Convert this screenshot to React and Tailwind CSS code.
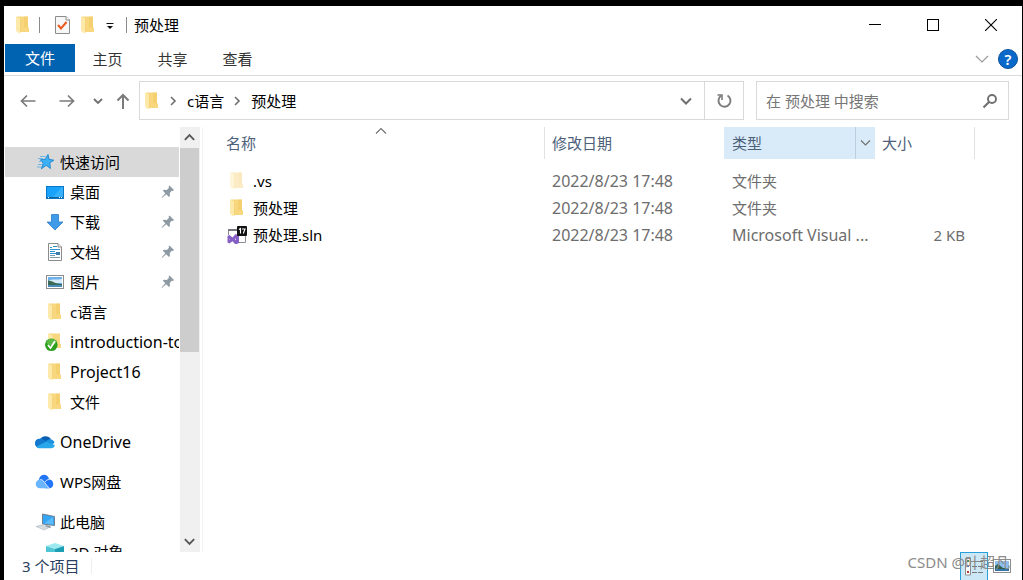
import React, { useState } from "react";

const FolderIcon = ({ faded = false }) => (
  <svg
    width="20"
    height="18"
    viewBox="0 0 20 18"
    className={faded ? "shrink-0 opacity-45" : "shrink-0"}
    aria-hidden="true"
  >
    <path d="M4 0.5H15V11.5H16V16H4Z" fill="#f8d77f" />
    <path d="M11 0.5H15V11.5H11Z" fill="#f4cb65" opacity="0.6" />
    <path d="M3 0.5L7.5 2.5V17.5L4 16L3 14Z" fill="#fde9a9" />
    <path d="M7.5 2.5V16" stroke="#edc65f" strokeWidth="0.5" />
  </svg>
);

const StarIcon = () => (
  <svg width="20" height="18" viewBox="0 0 20 18" className="shrink-0" aria-hidden="true">
    <path
      d="M13 1.5L14 6.3L18.8 7.2L14.8 9.8L15.4 15.5L11.2 12.3L6.4 15.8L8.2 10.2L5.4 6.8L10.2 6.3Z"
      fill="#3bb0f7"
      stroke="#1b83cf"
      strokeWidth="0.9"
    />
    <path d="M5 3.5H10.5M3 5.5H8M4 8.5H7M3 11.5H7M2 14H6" stroke="#63b1e8" strokeWidth="0.9" />
  </svg>
);

const DesktopIcon = () => (
  <svg width="20" height="18" viewBox="0 0 20 18" className="shrink-0" aria-hidden="true">
    <rect x="1.5" y="3.5" width="17" height="12" fill="#19a2fb" stroke="#0b76c4" />
    <path d="M8 14L17 4H18V14Z" fill="#45b7ff" opacity="0.7" />
    <path d="M2 14.5H18" stroke="#0a639f" />
    <path d="M3 14.5H5M14 14.5H17" stroke="#fff" strokeDasharray="1 1" />
  </svg>
);

const DownloadIcon = () => (
  <svg width="20" height="18" viewBox="0 0 20 18" className="shrink-0" aria-hidden="true">
    <path
      d="M6.5 1.5H13.5V9H18L10 17L2 9H6.5Z"
      fill="#3f9ae8"
      stroke="#2b7dc9"
      strokeWidth="0.8"
    />
  </svg>
);

const DocumentIcon = () => (
  <svg width="20" height="18" viewBox="0 0 20 18" className="shrink-0" aria-hidden="true">
    <path d="M3.5 0.5H13L16.5 4V17.5H3.5Z" fill="#fff" stroke="#8b8b8b" />
    <path d="M13 0.5V4H16.5" fill="#eee" stroke="#8b8b8b" />
    <path d="M5 4.5H7M8 3.5H12M5 6.5H15M5 8.5H10M5 10.5H15" stroke="#2b93d1" />
    <path d="M5 12.5H10M5 14.5H15" stroke="#7a9bb0" />
    <rect x="11" y="9" width="4" height="3" fill="#3b7fae" />
  </svg>
);

const PictureIcon = () => (
  <svg width="20" height="18" viewBox="0 0 20 18" className="shrink-0" aria-hidden="true">
    <rect x="1.5" y="2.5" width="17" height="13" fill="#fff" stroke="#8d8d8d" />
    <rect x="3" y="4" width="14" height="10" fill="#6fb1ea" />
    <path d="M3 8C7 5.5 12 7 17 6V10H3Z" fill="#d5ebf8" />
    <path d="M3 7.5C7 7.5 10 11 17 11V12H3Z" fill="#3b6b56" />
    <path d="M3 12H17V14H3Z" fill="#4a8dba" />
  </svg>
);

const SyncedFolderIcon = () => (
  <svg width="20" height="18" viewBox="0 0 20 18" className="shrink-0" aria-hidden="true">
    <path d="M4 0.5H15V11H16V15H4Z" fill="#f8d77f" />
    <path d="M3 0.5L7.5 2.5V12H3Z" fill="#fde9a9" />
    <circle cx="6.3" cy="11.7" r="6.3" fill="#2e9e1e" />
    <ellipse cx="6.3" cy="9" rx="4.8" ry="3" fill="#6cc552" opacity="0.7" />
    <path d="M3 12L5.5 15L10 8" stroke="#fff" strokeWidth="1.7" fill="none" />
  </svg>
);

const OneDriveIcon = () => (
  <svg width="20" height="18" viewBox="0 0 20 18" className="shrink-0" aria-hidden="true">
    <path d="M5 6.5A6 5.5 0 0 1 15.8 6L13 12H4Z" fill="#0a5fb2" />
    <path d="M4.5 5.7A4.8 4.8 0 0 1 8.5 6.5L14 10L6 15H4.5A4.5 4.5 0 0 1 4.5 5.7Z" fill="#1279cf" />
    <path d="M11 8.8C12 5.5 18 5 19.5 9.5L16 13Z" fill="#1b91e0" />
    <path d="M1.5 13.5L11 8.8L19.8 12C19.5 14.2 18 15.3 16 15.3H4.5C3.2 15.3 2 14.6 1.5 13.5Z" fill="#28a8ea" />
  </svg>
);

const WpsCloudIcon = () => (
  <svg width="20" height="18" viewBox="0 0 20 18" className="shrink-0" aria-hidden="true">
    <path d="M4 7A5 5 0 0 1 14 6.5A4.5 4.5 0 0 1 15 15.3H10L5 9Z" fill="#2176f5" />
    <path d="M5.3 6.5C9 6.5 10.5 12 14.5 15.3H5A4.4 4.4 0 0 1 5.3 6.5Z" fill="#69b5ff" />
    <path d="M5.3 6.5C9 6.5 10.5 12 14.5 15.3" stroke="#fff" strokeWidth="0.8" fill="none" />
    <path d="M10 9C11 7.3 12.5 6.6 14 6.5" stroke="#fff" strokeWidth="0.8" fill="none" />
  </svg>
);

const ComputerIcon = () => (
  <svg width="20" height="18" viewBox="0 0 20 18" className="shrink-0" aria-hidden="true">
    <path d="M7.5 1L19.5 3.5V12.5L7.5 11Z" fill="#34a6f5" stroke="#6a7681" strokeWidth="0.9" />
    <path d="M9 10.5L18 4V11.5Z" fill="#70c4fb" opacity="0.7" />
    <path d="M10 12L15 12.8L16 15L12 14.5Z" fill="#8d969d" />
    <path d="M1 13.5L6 12L14 14.5L9.5 17Z" fill="#d8dde0" stroke="#aab2b8" strokeWidth="0.6" />
  </svg>
);

const CubeIcon = () => (
  <svg width="20" height="18" viewBox="0 0 20 18" className="shrink-0" aria-hidden="true">
    <path d="M10 0L19 3L10 6L1 3Z" fill="#9ceaf0" />
    <path d="M1 3L10 6V18L1 15Z" fill="#4fc6d6" />
    <path d="M19 3L10 6V18L19 15Z" fill="#1c9fb4" />
  </svg>
);

const SolutionIcon = () => (
  <svg width="20" height="18" viewBox="0 0 20 18" className="shrink-0" aria-hidden="true">
    <path d="M1.5 9V3.5H18.5V16.5H12" fill="#fff" stroke="#8b8b93" />
    <rect x="1" y="3" width="10" height="2" fill="#77777f" />
    <path
      fillRule="evenodd"
      d="M8.5 8L12 9.5V17L8.5 18.5L5.5 15.2L2.5 17.5L0.5 16.5V10L2.5 9L5.5 11.5ZM9 12.3L8 13.3L9 14.3ZM2 12.7V14L2.6 13.3Z"
      fill="#865fc5"
    />
    <rect x="10" y="0" width="10" height="10" rx="1" fill="#111" />
    <path d="M12 3.5L13.5 2.5V7.5M15 3H18L16.3 7.5" stroke="#fff" strokeWidth="1.1" fill="none" />
  </svg>
);

const PinIcon = () => (
  <svg width="14" height="14" viewBox="0 0 14 14" className="mr-1 shrink-0" aria-hidden="true">
    <path
      d="M8.5 0.5L13 5L12 6L10.8 5.8L8.8 8L8.9 11L8 12L5.2 9.2L1 13L0.6 12.6L4.3 8.3L1.8 5.8L2.8 4.8L5.8 5L8 2.8L7.6 1.5Z"
      fill="#8e9aa3"
    />
  </svg>
);

const Chevron = ({ d, size = 14, className = "text-[#6f6f6f]", weight = 1.6 }) => (
  <svg width={size} height={size} viewBox="0 0 14 14" className={className} aria-hidden="true">
    <path d={d} fill="none" stroke="currentColor" strokeWidth={weight} />
  </svg>
);

const DOWN = "M2 4.5L7 9.5L12 4.5";
const UP = "M2 9.5L7 4.5L12 9.5";
const RIGHT = "M5 3L9 7L5 11";

const quickAccess = [
  { name: "桌面", icon: <DesktopIcon />, pinned: true },
  { name: "下载", icon: <DownloadIcon />, pinned: true },
  { name: "文档", icon: <DocumentIcon />, pinned: true },
  { name: "图片", icon: <PictureIcon />, pinned: true },
  { name: "c语言", icon: <FolderIcon /> },
  { name: "introduction-to", icon: <SyncedFolderIcon /> },
  { name: "Project16", icon: <FolderIcon /> },
  { name: "文件", icon: <FolderIcon /> },
];

const files = [
  { name: ".vs", icon: <FolderIcon faded />, date: "2022/8/23 17:48", type: "文件夹", size: "" },
  { name: "预处理", icon: <FolderIcon />, date: "2022/8/23 17:48", type: "文件夹", size: "" },
  {
    name: "预处理.sln",
    icon: <SolutionIcon />,
    date: "2022/8/23 17:48",
    type: "Microsoft Visual ...",
    size: "2 KB",
  },
];

const textSize = (text) => (/^[\x20-\x7e]+$/.test(text) ? "text-[16px]" : "text-[15px]");

const TreeItem = ({ icon, name, pinned, nested, active }) => (
  <a
    href="#"
    className={`flex h-[30px] shrink-0 items-center gap-[5px] ${nested ? "pl-10" : "pl-[30px]"} ${
      active ? "bg-[#d9d9d9]" : ""
    }`}
  >
    {icon}
    <span className={`flex-1 overflow-hidden whitespace-nowrap ${textSize(name)}`}>{name}</span>
    {pinned && <PinIcon />}
  </a>
);

const TitleBar = () => (
  <header className="flex h-[38px] shrink-0 items-center pl-[9px]">
    <FolderIcon />
    <span className="ml-1.5 h-4 w-px bg-[#8a8a8a]" />
    <button type="button" aria-label="属性" className="ml-[14px]">
      <svg width="16" height="18" viewBox="0 0 16 18">
        <path d="M1.5 0.5H12L15.5 4V17.5H1.5Z" fill="#f7f7f7" stroke="#8c8c8c" />
        <path d="M12 0.5V4H15.5" fill="#fff" stroke="#8c8c8c" />
        <path d="M4 9L7 12.5L12.5 6" fill="none" stroke="#e8591c" strokeWidth="2" />
      </svg>
    </button>
    <button type="button" aria-label="新建文件夹" className="ml-2">
      <FolderIcon />
    </button>
    <button type="button" aria-label="自定义快速访问工具栏" className="ml-2">
      <svg width="8" height="10" viewBox="0 0 8 10">
        <path d="M0.5 3.5H7.5" stroke="#111" />
        <path d="M1 6H7L4 9Z" fill="#111" />
      </svg>
    </button>
    <span className="ml-3 h-4 w-px bg-[#8a8a8a]" />
    <h1 className="ml-[7px] flex-1">预处理</h1>
    <div className="mr-0.5 flex h-full">
      <button type="button" aria-label="最小化" className="flex w-[58px] items-center justify-center">
        <svg width="12" height="12" viewBox="0 0 12 12">
          <path d="M0 5.5H12" stroke="#000" />
        </svg>
      </button>
      <button type="button" aria-label="最大化" className="flex w-[58px] items-center justify-center">
        <svg width="12" height="12" viewBox="0 0 12 12">
          <rect x="0.5" y="0.5" width="11" height="11" fill="none" stroke="#000" />
        </svg>
      </button>
      <button type="button" aria-label="关闭" className="flex w-[58px] items-center justify-center">
        <svg width="12" height="12" viewBox="0 0 12 12">
          <path d="M0 0L12 12M12 0L0 12" stroke="#000" strokeWidth="1.1" />
        </svg>
      </button>
    </div>
  </header>
);

const Ribbon = () => (
  <nav className="flex h-8 shrink-0 items-start border-b border-[#dadbdc] pl-px text-[#333]">
    <button type="button" className="h-7 w-[70px] bg-[#0063b1] text-white">
      文件
    </button>
    <button type="button" className="h-[30px] w-[65px]">主页</button>
    <button type="button" className="h-[30px] w-[65px]">共享</button>
    <button type="button" className="h-[30px] w-[65px]">查看</button>
    <div className="mr-1 ml-auto flex h-[30px] items-center gap-[9px]">
      <button type="button" aria-label="展开功能区">
        <Chevron d="M1 4L7 10L13 4" weight={1.2} className="text-[#9a9a9a]" />
      </button>
      <button
        type="button"
        aria-label="帮助"
        className="h-5 w-5 rounded-full border border-[#0b539c] bg-[#0a68cb] text-[15px] leading-[18px] font-semibold text-white"
      >
        ?
      </button>
    </div>
  </nav>
);

const AddressRow = ({ query, setQuery }) => (
  <div className="flex h-[51px] shrink-0 items-start pt-[5px] pr-[13px] text-[#7b7b7b]">
    <div className="flex h-10 w-[135px] items-center pl-4">
      <button type="button" aria-label="后退">
        <svg width="16" height="14" viewBox="0 0 16 14">
          <path d="M15.5 7H1.5M7 1.5L1.5 7L7 12.5" fill="none" stroke="currentColor" strokeWidth="1.7" />
        </svg>
      </button>
      <button type="button" aria-label="前进" className="ml-[23px]">
        <svg width="16" height="14" viewBox="0 0 16 14">
          <path d="M0.5 7H14.5M9 1.5L14.5 7L9 12.5" fill="none" stroke="currentColor" strokeWidth="1.7" />
        </svg>
      </button>
      <button type="button" aria-label="最近浏览的位置" className="ml-4">
        <Chevron d="M3 5L7 9L11 5" weight={1.8} />
      </button>
      <button type="button" aria-label="上移" className="ml-[11px]">
        <svg width="14" height="16" viewBox="0 0 14 16">
          <path d="M7 16V2M1.5 7.5L7 2L12.5 7.5" fill="none" stroke="currentColor" strokeWidth="2" />
        </svg>
      </button>
    </div>
    <div className="flex h-[39px] flex-1 items-center border border-[#d9d9d9] pl-0.5 text-black">
      <FolderIcon />
      <span className="ml-1"><Chevron d={RIGHT} /></span>
      <a href="#" className="ml-[7px]">c语言</a>
      <span className="ml-[6px]"><Chevron d={RIGHT} /></span>
      <a href="#" className="ml-[7px] flex-1">预处理</a>
      <button type="button" aria-label="以前的位置" className="mr-[11px]">
        <Chevron d={DOWN} weight={2} />
      </button>
      <button
        type="button"
        aria-label="刷新"
        className="flex h-full w-[39px] items-center justify-center border-l border-[#d9d9d9] text-[#7b7b7b]"
      >
        <svg width="16" height="16" viewBox="0 0 16 16">
          <path d="M11.5 2.5A6 6 0 1 1 5 2.8" fill="none" stroke="currentColor" strokeWidth="1.9" />
          <path d="M1.5 2H6V7" fill="none" stroke="currentColor" strokeWidth="1.6" />
        </svg>
      </button>
    </div>
    <label className="ml-3 flex h-[39px] w-[253px] items-center border border-[#d9d9d9] pr-2.5 pl-[9px]">
      <input
        type="text"
        aria-label="搜索"
        value={query}
        onChange={(e) => setQuery(e.target.value)}
        placeholder="在 预处理 中搜索"
        className="min-w-0 flex-1 outline-none placeholder:text-[#767676]"
      />
      <svg width="16" height="16" viewBox="0 0 16 16" aria-hidden="true">
        <circle cx="10" cy="6" r="4" fill="none" stroke="#707070" strokeWidth="1.9" />
        <path d="M7 9L1.5 14.5" stroke="#707070" strokeWidth="2.2" />
      </svg>
    </label>
  </div>
);

const Sidebar = () => (
  <aside className="flex w-[199px] shrink-0 border-r border-[#f3f3f3] pl-px">
    <nav className="flex w-[174px] flex-col overflow-hidden pt-5">
      <TreeItem name="快速访问" icon={<StarIcon />} active />
      {quickAccess.map((item) => (
        <TreeItem key={item.name} {...item} nested />
      ))}
      <div className="mt-2.5 flex flex-col gap-2.5">
        <TreeItem name="OneDrive" icon={<OneDriveIcon />} />
        <TreeItem name="WPS网盘" icon={<WpsCloudIcon />} />
        <TreeItem name="此电脑" icon={<ComputerIcon />} />
      </div>
      <TreeItem name="3D 对象" icon={<CubeIcon />} nested />
    </nav>
    <div className="ml-px flex w-5 flex-col bg-[#f0f0f0]">
      <button type="button" aria-label="向上滚动" className="flex h-[21px] w-[19px] items-center justify-center">
        <Chevron d={UP} weight={2} className="text-[#555]" size={13} />
      </button>
      <div className="flex-1">
        <div className="h-1/2 min-h-[204px] w-[19px] bg-[#cdcdcd]" />
      </div>
      <button type="button" aria-label="向下滚动" className="flex h-[21px] w-[19px] items-center justify-center">
        <Chevron d={DOWN} weight={2} className="text-[#555]" size={13} />
      </button>
    </div>
  </aside>
);

const FileTable = () => (
  <main className="min-w-0 flex-1 overflow-hidden">
    <table className="w-[772px] table-fixed text-left">
      <colgroup>
        <col className="w-[342px]" />
        <col className="w-[179px]" />
        <col className="w-[151px]" />
        <col className="w-[100px]" />
      </colgroup>
      <thead className="text-[#4c607a]">
        <tr>
          <th className="p-0 pb-2 font-normal">
            <div className="relative flex h-8 items-center border-r border-[#e2e2e2] pl-[23px]">
              名称
              <span className="absolute top-[-3px] left-1/2">
                <Chevron d={UP} weight={1.1} />
              </span>
            </div>
          </th>
          <th className="p-0 pb-2 font-normal">
            <div className="flex h-8 items-center pl-[7px]">修改日期</div>
          </th>
          <th className="p-0 pb-2 font-normal">
            <div className="flex h-8 items-center bg-[#d9ebf9] pl-2">
              <span className="flex-1">类型</span>
              <button
                type="button"
                aria-label="筛选类型"
                className="flex h-full w-5 items-center justify-center border-l border-[#bccfdf]"
              >
                <Chevron d="M2 4.5L6.5 9L11 4.5" weight={1.1} />
              </button>
            </div>
          </th>
          <th className="p-0 pb-2 font-normal">
            <div className="flex h-8 items-center border-r border-[#e2e2e2] pl-[7px]">大小</div>
          </th>
        </tr>
      </thead>
      <tbody className="whitespace-nowrap text-[#6d6d6d]">
        {files.map((file) => (
          <tr key={file.name} className="h-[27px]">
            <td className="p-0 pl-6 text-black">
              <div className="flex items-center gap-1.5">
                {file.icon}
                {file.name}
              </div>
            </td>
            <td className={`p-0 pl-[7px] ${textSize(file.date)}`}>{file.date}</td>
            <td className={`p-0 pl-2 ${textSize(file.type)}`}>{file.type}</td>
            <td className="p-0 pr-2.5 text-right">{file.size}</td>
          </tr>
        ))}
      </tbody>
    </table>
  </main>
);

const StatusBar = () => (
  <footer className="relative flex h-7 shrink-0 items-center pr-[10px] pl-[18px] text-[#29405e]">
    <span>3 个项目</span>
    <span className="ml-3 h-4 w-px bg-[#eeeeee]" />
    <button
      type="button"
      aria-label="详细信息"
      className="ml-auto flex h-7 w-7 items-center justify-center border border-b-0 border-[#26a0da] bg-[#cce8f6]"
    >
      <svg width="18" height="18" viewBox="0 0 18 18">
        <path d="M0.5 0.5H5.5V17H0.5Z" fill="#fff" stroke="#8e8e8e" />
        <rect x="2" y="2" width="2" height="2" fill="#3f8f62" />
        <rect x="2" y="7" width="2" height="2" fill="#3c76c9" />
        <rect x="2" y="13" width="2" height="2" fill="#b23a2f" />
        <path d="M7 3.5H12M13 3.5H18M7 8.5H12M13 8.5H18M7 14.5H12M13 14.5H18" stroke="#777" />
      </svg>
    </button>
    <button type="button" aria-label="大缩略图" className="ml-1">
      <svg width="20" height="16" viewBox="0 0 20 16">
        <rect x="1.5" y="1.5" width="17" height="13" fill="#fff" stroke="#8d8d8d" />
        <rect x="3" y="3" width="14" height="10" fill="#8dbff0" />
        <path d="M3 8L6 6L11 10H17V11H3Z" fill="#2f5f4c" />
        <path d="M3 11H17V13H3Z" fill="#3474a8" />
      </svg>
    </button>
    <span className="pointer-events-none absolute top-0 right-3 text-[#8b8b8b]">
      CSDN @叶超凡
    </span>
  </footer>
);

const App = () => {
  const [query, setQuery] = useState("");

  return (
    <div className="h-screen bg-black pt-1.5 pr-px pl-1">
      <div className="flex h-full flex-col overflow-hidden bg-white font-['Noto_Sans','Noto_Sans_CJK_SC',sans-serif] text-[15px] leading-5 text-black">
        <TitleBar />
        <Ribbon />
        <AddressRow query={query} setQuery={setQuery} />
        <div className="flex min-h-0 flex-1">
          <Sidebar />
          <FileTable />
        </div>
        <StatusBar />
      </div>
    </div>
  );
};

export default App;
